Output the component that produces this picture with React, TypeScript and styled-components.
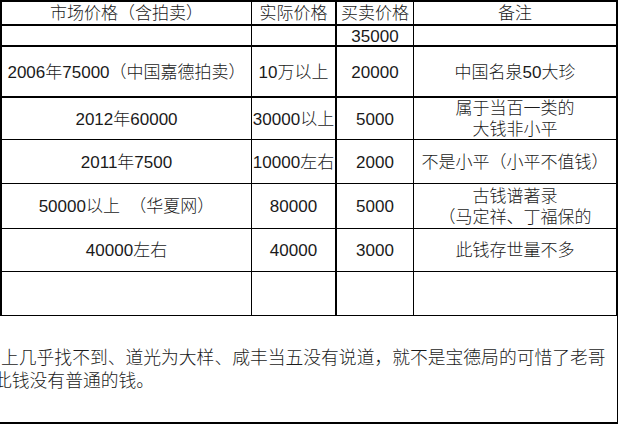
import React from "react";
import styled, { createGlobalStyle } from "styled-components";

const Global = createGlobalStyle`
  html, body { margin: 0; padding: 0; background: #fff; }
  body {
    font-family: "Liberation Sans", "Noto Sans CJK SC", sans-serif;
    color: #1a1a1a;
    overflow: hidden;
  }
`;

const Page = styled.div`
  width: 619px;
  height: 424px;
  overflow: hidden;
  display: flex;
  flex-direction: column;
`;

const Sheet = styled.div`
  width: 618px;
  box-sizing: border-box;
  border-top: 2px solid #000;
  border-left: 2px solid #000;
  display: grid;
  grid-template-columns: 250px 85px 77px 204px;
  grid-template-rows: 24px 21px 51px 42px 44px 45px 43px 44px;
`;

const Cell = styled.div<{ $bottom: number; $right: number }>`
  box-sizing: border-box;
  border-bottom: ${(p) => p.$bottom}px solid #000;
  border-right: ${(p) => p.$right}px solid #000;
  display: flex;
  align-items: center;
  justify-content: center;
  text-align: center;
  font-size: 17px;
  font-weight: 300;
  line-height: 21px;
  padding-top: 1px;
  white-space: pre;
  overflow: hidden;
`;

const Note = styled.div`
  width: 618px;
  height: 108px;
  box-sizing: border-box;
  border-right: 1px solid #000;
  border-bottom: 2px solid #000;
  padding-top: 31px;
  overflow: hidden;
  display: flex;
  flex-direction: column;
`;

const NoteLine = styled.div<{ $indent: number }>`
  font-size: 17.8px;
  font-weight: 300;
  line-height: 23px;
  white-space: nowrap;
  margin-left: ${(p) => p.$indent}px;
`;

const colRight = [1, 2, 1, 2];
const rowBottom = [2, 2, 2, 1, 1, 1, 1, 1];

const rows: string[][] = [
  ["市场价格（含拍卖）", "实际价格", "买卖价格", "备注"],
  ["", "", "35000", ""],
  ["2006年75000（中国嘉德拍卖）", "10万以上", "20000", "中国名泉50大珍"],
  ["2012年60000", "30000以上", "5000", "属于当百一类的\n大钱非小平"],
  ["2011年7500", "10000左右", "2000", "不是小平（小平不值钱）"],
  ["50000以上  （华夏网）", "80000", "5000", "古钱谱著录\n（马定祥、丁福保的"],
  ["40000左右", "40000", "3000", "此钱存世量不多"],
  ["", "", "", ""],
];

export default function App() {
  return (
    <Page>
      <Global />
      <Sheet>
        {rows.map((row, r) =>
          row.map((text, c) => (
            <Cell key={`${r}-${c}`} $bottom={rowBottom[r]} $right={colRight[c]}>
              {text}
            </Cell>
          ))
        )}
      </Sheet>
      <Note>
        <NoteLine $indent={1}>
          上几乎找不到、道光为大样、咸丰当五没有说道，就不是宝德局的可惜了老哥
        </NoteLine>
        <NoteLine $indent={-6}>此钱没有普通的钱。</NoteLine>
      </Note>
    </Page>
  );
}
